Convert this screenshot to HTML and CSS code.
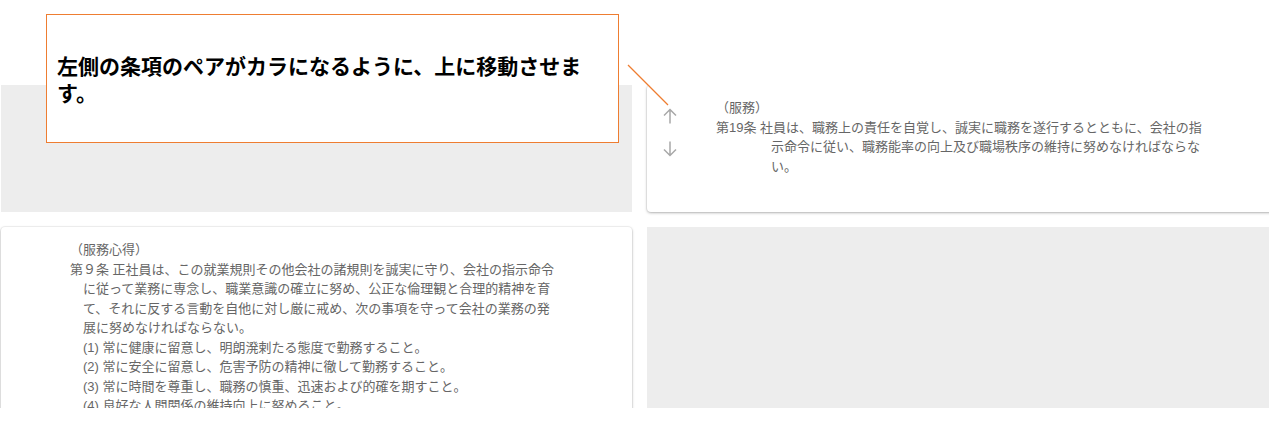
FILE: index.html
```html
<!DOCTYPE html>
<html lang="ja">
<head>
  <meta charset="UTF-8">
  <meta name="viewport" content="width=device-width, initial-scale=1">
  <title>条項の並べ替え</title>
  <link rel="stylesheet" href="styles.css">
</head>
<body>
  <div class="board">
    <div class="slot empty"></div>

    <div class="slot card">
      <div class="moves">
        <svg class="move" viewBox="0 0 14 16" width="14" height="16"><path d="M7 15.5V1.5M1 7.5L7 1.5 13 7.5"/></svg>
        <svg class="move" viewBox="0 0 14 16" width="14" height="16"><path d="M7 0.5v14M1 8.5L7 14.5 13 8.5"/></svg>
      </div>
      <div class="clause">
        <p class="caption">（服務）</p>
        <p class="article">第19条 社員は、職務上の責任を自覚し、誠実に職務を遂行するとともに、会社の指示命令に従い、職務能率の向上及び職場秩序の維持に努めなければならない。</p>
      </div>
    </div>

    <div class="slot card">
      <div class="moves"></div>
      <div class="clause">
        <p class="caption">（服務心得）</p>
        <p class="article short">第９条 正社員は、この就業規則その他会社の諸規則を誠実に守り、会社の指示命令に従って業務に専念し、職業意識の確立に努め、公正な倫理観と合理的精神を育て、それに反する言動を自他に対し厳に戒め、次の事項を守って会社の業務の発展に努めなければならない。</p>
        <p class="item">(1) 常に健康に留意し、明朗溌剌たる態度で勤務すること。</p>
        <p class="item">(2) 常に安全に留意し、危害予防の精神に徹して勤務すること。</p>
        <p class="item">(3) 常に時間を尊重し、職務の慎重、迅速および的確を期すこと。</p>
        <p class="item">(4) 良好な人間関係の維持向上に努めること。</p>
      </div>
    </div>

    <div class="slot empty"></div>
  </div>

  <div class="callout">
    <p>左側の条項のペアがカラになるように、上に移動させます。</p>
  </div>
  <svg class="pointer" width="46" height="46" viewBox="0 0 46 46"><path d="M2 2L42 42" stroke="#ee7d31"/></svg>
</body>
</html>
```

FILE: styles.css
```css
body {
  margin: 0;
  overflow: hidden;
  background: #fff;
  font-family: "Liberation Sans", "Noto Sans CJK JP", sans-serif;
}
p {
  margin: 0;
}
.board {
  display: grid;
  grid-template-columns: 631px 631px;
  grid-template-rows: 127px 200px;
  gap: 15px;
  margin-top: 85px;
  padding-left: 1px;
  height: 323px;
  overflow: hidden;
}
.slot {
  border-radius: 4px;
}
.empty {
  background: #ededed;
  border-radius: 0;
}
.card {
  background: #fff;
  box-shadow: 0 0 0 1px rgba(0,0,0,0.04), 0 1px 3px rgba(0,0,0,0.28);
  display: flex;
  padding: 13px 0 0 16px;
}
.moves {
  width: 53px;
  flex: none;
  display: flex;
  flex-direction: column;
  gap: 17px;
  padding-top: 10px;
}
.move {
  fill: none;
  stroke: #a8a8a8;
  stroke-width: 1.5;
}
.clause {
  width: 490px;
  font-size: 13px;
  line-height: 19.5px;
  color: #666;
}
.article {
  padding-left: 55px;
  text-indent: -55px;
}
.article.short {
  padding-left: 13px;
  text-indent: -13px;
}
.item {
  margin-left: 13px;
}
.callout {
  position: absolute;
  top: 14px;
  left: 46px;
  width: 537px;
  height: 127px;
  border: 1px solid #ee7d31;
  background: #fff;
  display: flex;
  align-items: center;
  padding: 0 24px 0 10px;
}
.callout p {
  font-family: "Noto Sans CJK JP", sans-serif;
  font-weight: bold;
  font-size: 21px;
  line-height: 27px;
  color: #000;
}
.pointer {
  position: absolute;
  top: 63px;
  left: 626px;
  fill: none;
  stroke-width: 1.2;
}
```
